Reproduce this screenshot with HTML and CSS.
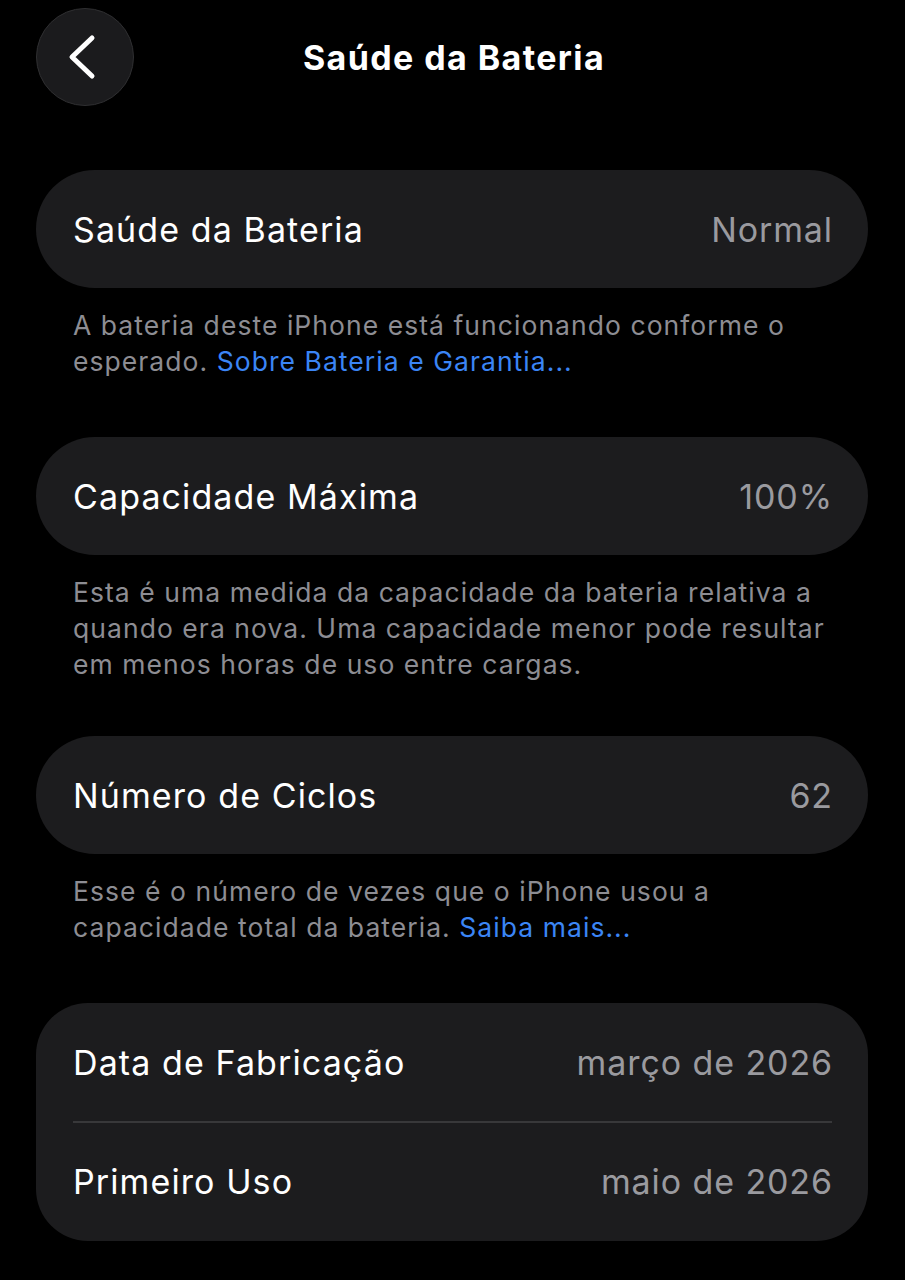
FILE: index.html
```html
<!DOCTYPE html>
<html lang="pt-BR">
<head>
<meta charset="utf-8">
<title>Saúde da Bateria</title>
<link rel="stylesheet" href="styles.css">
</head>
<body>
<div class="screen">
  <header class="nav">
    <button class="back" aria-label="Voltar">
      <svg width="40" height="50" viewBox="0 0 40 50"><path d="M30 6 L10 25 L30 44" fill="none" stroke="#fff" stroke-width="5" stroke-linecap="round" stroke-linejoin="round"/></svg>
    </button>
    <h1 class="title">Saúde da Bateria</h1>
  </header>

  <section class="group first">
    <div class="card">
      <div class="row"><span class="label">Saúde da Bateria</span><span class="value">Normal</span></div>
    </div>
    <p class="footer">A bateria deste iPhone está funcionando conforme o esperado. <a class="link">Sobre Bateria e Garantia...</a></p>
  </section>

  <section class="group g2">
    <div class="card">
      <div class="row"><span class="label">Capacidade Máxima</span><span class="value">100%</span></div>
    </div>
    <p class="footer">Esta é uma medida da capacidade da bateria relativa a quando era nova. Uma capacidade menor pode resultar em menos horas de uso entre cargas.</p>
  </section>

  <section class="group g3">
    <div class="card">
      <div class="row"><span class="label">Número de Ciclos</span><span class="value">62</span></div>
    </div>
    <p class="footer">Esse é o número de vezes que o iPhone usou a capacidade total da bateria. <a class="link">Saiba mais...</a></p>
  </section>

  <section class="group g4">
    <div class="card multi">
      <div class="row"><span class="label">Data de Fabricação</span><span class="value">março de 2026</span></div>
      <div class="sep"></div>
      <div class="row"><span class="label">Primeiro Uso</span><span class="value">maio de 2026</span></div>
    </div>
  </section>
</div>
</body>
</html>
```

FILE: styles.css
```css
* { box-sizing: border-box; }
html, body { margin: 0; padding: 0; background: #000; }
body {
  font-family: Inter, "Noto Sans", "Liberation Sans", sans-serif;
  color: #fff;
  -webkit-font-smoothing: antialiased;
}
.screen { width: 905px; min-height: 1280px; padding: 8px 37px 0 36px; }
.nav {
  position: relative;
  height: 98px;
  display: flex;
  align-items: center;
  justify-content: center;
}
.back {
  position: absolute;
  left: 0; top: 0;
  width: 98px; height: 98px;
  border-radius: 50%;
  background: #1b1b1d;
  border: 1.5px solid #2f2f31;
  display: flex; align-items: center; justify-content: center;
  padding: 0 6px 0 0;
}
.title {
  margin: 0;
  font-size: 34px;
  font-weight: 700;
  letter-spacing: 1.4px;
  padding-left: 4px;
}
.group { margin-top: 57px; }
.group.first { margin-top: 64px; }
.group.g2 { margin-top: 58px; }
.group.g3 { margin-top: 54px; }
.group.g4 { margin-top: 58px; }
.card {
  background: #1c1c1e;
  border-radius: 59px;
}
.card.multi { border-radius: 52px; }
.row {
  height: 118px;
  display: flex;
  align-items: center;
  justify-content: space-between;
  padding: 0 35px 0 37px;
}
.label { font-size: 34px; font-weight: 400; letter-spacing: 1.1px; }
.value { font-size: 34px; color: #9a9a9f; letter-spacing: 0.9px; }
.sep { height: 1.5px; background: #38383a; margin: 0 36px 0 37px; }
.footer {
  margin: 0;
  padding: 19px 37px 0 37px;
  font-size: 26.5px;
  line-height: 36px;
  color: #8d8d93;
  letter-spacing: 1.05px;
}
.link { color: #3b85f5; text-decoration: none; }
```
